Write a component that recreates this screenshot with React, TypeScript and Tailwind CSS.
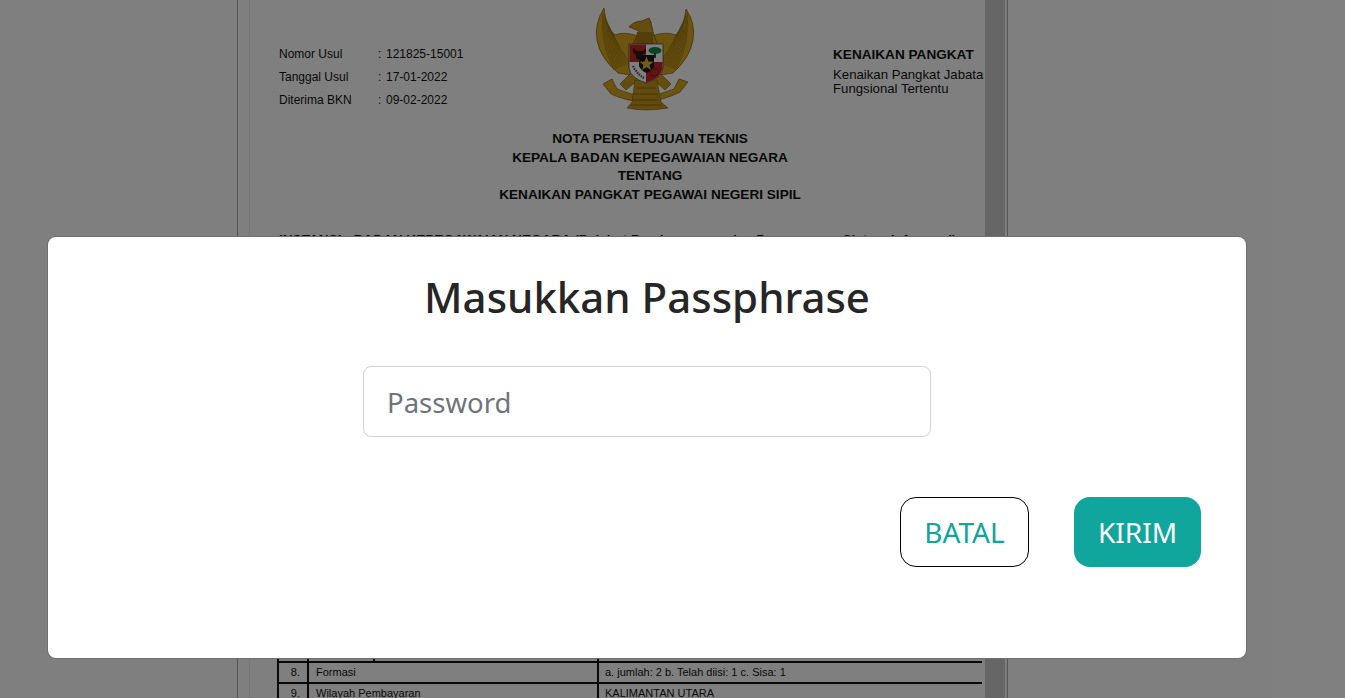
const sans = "font-['Liberation_Sans',Arial,sans-serif]";

function Garuda() {
  const feathers = [];
  for (let i = 0; i < 12; i++) {
    feathers.push(`M${13 + i * 0.9} ${12 + i * 2} Q${9 + i * 2} ${40 + i} ${24 + i * 1.5} ${70 - i * 0.6}`);
  }
  return (
    <svg viewBox="0 0 115 115" className="h-[115px] w-[115px] shrink-0">
      <path d="M14 8 Q4 24 7 40 Q10 58 28 73 L46 76 L48 36 Q34 31 25 35 Q16 28 14 8Z" fill="#d9a821" stroke="#7d5c08" strokeWidth="0.7" />
      <path d="M96 9 Q106 24 103 40 Q100 58 83 73 L64 76 L62 36 Q76 31 86 35 Q94 28 96 9Z" fill="#d9a821" stroke="#7d5c08" strokeWidth="0.7" />
      {feathers.map((d, i) => (
        <path key={i} d={d} fill="none" stroke="#7d5c08" strokeWidth="0.5" />
      ))}
      {feathers.map((d, i) => (
        <path key={i} d={d} fill="none" stroke="#7d5c08" strokeWidth="0.5" transform="matrix(-1 0 0 1 110 0)" />
      ))}
      <path d="M39 27 Q44 21 52 21 L59 18 L61 22 L63 32 L68 46 L42 46 L49 31 Q44 29 39 27Z" fill="#c99a1c" stroke="#6f5006" strokeWidth="0.7" />
      <path d="M47 32 H63 V45 H45Z" fill="#a97f12" />
      <path d="M42 72 L30 84 L36 90 L50 78Z M69 72 L81 84 L75 90 L61 78Z" fill="#c99a1c" stroke="#7d5c08" strokeWidth="0.6" />
      <path d="M13 84 L22 79 L27 89 Q55 102 84 89 L89 79 L98 82 L90 92 Q55 110 21 94Z" fill="#d9a821" stroke="#7d5c08" strokeWidth="0.7" />
      <path d="M45 80 H67 L71 102 L78 108 Q56 112 37 108 L42 102Z" fill="#c4961a" stroke="#7d5c08" strokeWidth="0.6" />
      <path d="M46 88 H66 M44 94 H68 M43 100 H69 M41 105 H72" stroke="#7d5c08" strokeWidth="0.7" />
      <path d="M39 44 H73 V68 Q72 78 56 83 Q40 78 39 68Z" fill="#fff" stroke="#333" strokeWidth="0.7" />
      <path d="M39.5 44.5 H56 V62 H39.5Z" fill="#c4262a" />
      <path d="M56 62 H72.5 V68 Q71 78 56 82.5Z" fill="#c4262a" />
      <path d="M43 48 L47 51 H53 L56 48 V52 L52 55 V59 H46 V55 L43 52Z" fill="#2a1a10" />
      <ellipse cx="65" cy="50.5" rx="6.5" ry="3.6" fill="#0f8a4a" />
      <rect x="64" y="53" width="2" height="5" fill="#0f5a30" />
      <path d="M43 66 Q47 74 54 78" fill="none" stroke="#555" strokeWidth="2.2" strokeDasharray="1.5 1" />
      <ellipse cx="64" cy="72" rx="4.5" ry="4" fill="none" stroke="#8e1a1c" strokeWidth="1" />
      <path d="M49 55 H64 V66 Q62 71 56.5 73 Q51 71 49 66Z" fill="#1b1b1b" />
      <path d="M56.5 56.5 L58.4 61.6 L63.5 61.8 L59.5 64.9 L60.9 70 L56.5 67 L52.1 70 L53.5 64.9 L49.5 61.8 L54.6 61.6Z" fill="#e6b92c" />
    </svg>
  );
}

function InfoRow({ label, value }: { label: string; value: string }) {
  return (
    <div className="flex h-[23px] items-center">
      <span className="w-[99px]">{label}</span>
      <span className="w-[8px]">:</span>
      <span>{value}</span>
    </div>
  );
}

function TableRow({ no, name, value }: { no: string; name: string; value: string }) {
  return (
    <div className="flex h-[21px] shrink-0 items-center border-b-2 border-[#111]">
      <span className="flex h-full w-[30px] items-center justify-end border-r-2 border-[#111] pr-[7px]">{no}</span>
      <span className="flex h-full w-[290px] items-center border-r-2 border-[#111] pl-[7px]">{name}</span>
      <span className="pl-[6px]">{value}</span>
    </div>
  );
}

function DocumentPage() {
  return (
    <div className={`ml-[237px] flex h-[698px] w-[771px] border-x border-[#aaa] pl-[11px] pr-[2px] ${sans}`}>
      <div className="h-full w-[735px] shrink-0 overflow-hidden border-l border-[#eee] pl-[29px] text-[12px] leading-none text-[#111]">
        <div className="w-[742px]">
          <div className="flex h-[115px] items-start">
            <div className="mt-[42px] w-[311px] shrink-0">
              <InfoRow label="Nomor Usul" value="121825-15001" />
              <InfoRow label="Tanggal Usul" value="17-01-2022" />
              <InfoRow label="Diterima BKN" value="09-02-2022" />
            </div>
            <Garuda />
            <div className="ml-[128px] mt-[48px] shrink-0 whitespace-nowrap">
              <div className="text-[13.6px] font-bold">KENAIKAN PANGKAT</div>
              <div className="mt-[6px] text-[13.2px] leading-[14px]">
                Kenaikan Pangkat Jabatan
                <br />
                Fungsional Tertentu
              </div>
            </div>
          </div>
          <div className="mt-[15px] text-center text-[13.6px] font-bold leading-[18.7px]">
            <div>NOTA PERSETUJUAN TEKNIS</div>
            <div>KEPALA BADAN KEPEGAWAIAN NEGARA</div>
            <div>TENTANG</div>
            <div>KENAIKAN PANGKAT PEGAWAI NEGERI SIPIL</div>
          </div>
          <div className="mt-[28px] whitespace-nowrap text-[13.6px] font-bold">
            INSTANSI : BADAN KEPEGAWAIAN NEGARA (Pejabat Pembangunan dan Pengawasan Sistem Informasi)
          </div>
        </div>
        <div className="ml-[-2px] mt-[397px] w-[705px] border-l-2 border-[#111] text-[11px]">
          <div className="flex h-[20px] border-b-2 border-[#111]">
            <span className="w-[30px] border-r-2 border-[#111]" />
            <span className="w-[66px] border-r-2 border-[#111]" />
            <span className="w-[224px] border-r-2 border-[#111]" />
          </div>
          <TableRow no="8." name="Formasi" value="a. jumlah: 2 b. Telah diisi: 1 c. Sisa: 1" />
          <TableRow no="9." name="Wilayah Pembayaran" value="KALIMANTAN UTARA" />
        </div>
      </div>
      <div className="ml-[1px] h-full w-[21px] bg-[#cdcdcd]" />
    </div>
  );
}

export default function App() {
  return (
    <div className="relative h-[698px] w-[1345px] overflow-hidden bg-white">
      <DocumentPage />
      <div className="absolute inset-0 bg-black/50">
        <div className="absolute left-[48px] top-[237px] flex h-[421px] w-[1198px] flex-col items-center rounded-[8px] bg-white pt-[27px] font-['Noto_Sans',sans-serif] ring-1 ring-[#707070]">
          <h2 className="text-[42px] font-medium leading-[66px] text-[#262626]">Masukkan Passphrase</h2>
          <input
            type="password"
            placeholder="Password"
            className="mt-[36px] h-[71px] w-[568px] rounded-[8px] border border-[#ced4da] bg-white px-[23px] pt-[2px] text-[27.5px] outline-none placeholder:text-[#6c757d]"
          />
          <div className="mt-[60px] flex w-full justify-end gap-[45px] pr-[45px]">
            <button className="h-[70px] w-[129px] rounded-[16px] border border-black bg-white text-[28px] text-[#10a59d]">BATAL</button>
            <button className="h-[70px] w-[127px] rounded-[16px] bg-[#10a59d] text-[28px] text-white">KIRIM</button>
          </div>
        </div>
      </div>
    </div>
  );
}
